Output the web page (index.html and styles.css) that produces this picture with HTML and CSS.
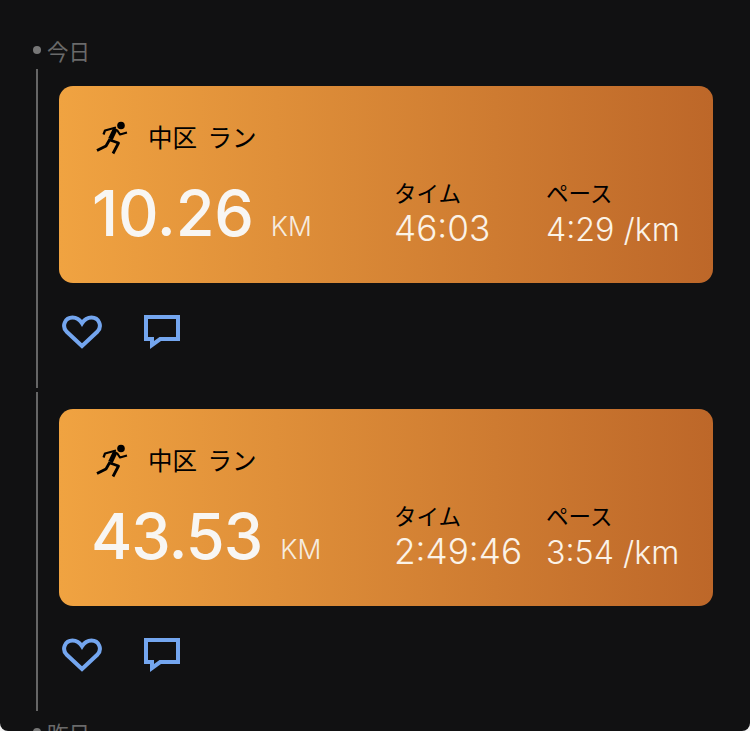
FILE: index.html
```html
<!DOCTYPE html>
<html lang="ja">
<head>
<meta charset="utf-8">
<title>今日</title>
<link rel="stylesheet" href="styles.css">
</head>
<body>
<main class="feed">
  <div class="day"><span class="dot"></span><span>今日</span></div>
  <section class="entry">
    <article class="card">
      <div class="title">
        <svg class="runner" viewBox="0 0 32 36">
          <circle class="runner-head" cx="25" cy="5.500" r="3.800"/>
          <path class="limb-torso" d="M19.500 8.500 L14.500 19"/>
          <path class="limb-thin" d="M7.500 14.500 L9 10.500 L20 7.500"/>
          <path class="limb-thin" d="M21 10 L24 14.500 L31 12.500"/>
          <path class="limb" d="M14 19 L10 26 L1 30.500"/>
          <path class="limb" d="M14 20 L22.500 23 L17 33.500"/>
        </svg>
        <span class="place">中区 ラン</span>
      </div>
      <div class="stats">
        <div class="distance"><span class="big big-a">10.26</span><span class="unit">KM</span></div>
        <div class="metric metric-time"><span class="label">タイム</span><span class="value value-time">46:03</span></div>
        <div class="metric"><span class="label">ペース</span><span class="value value-pace">4:29 /km</span></div>
      </div>
    </article>
    <div class="actions">
      <svg class="heart" viewBox="0 0 40 34"><path d="M20 31 L4.500 16.500 C-0.500 11 3 2.500 10.500 2.500 C14.500 2.500 18 5 20 8.200 C22 5 25.500 2.500 29.500 2.500 C37 2.500 40.500 11 35.500 16.500 Z"/></svg>
      <svg class="bubble" viewBox="0 0 36 34"><path fill-rule="evenodd" d="M0 0 H36 V26 H17 L6 34 V26 H0 Z M4 4 V22 H10 V26 L15.500 22 H32 V4 Z"/></svg>
    </div>
  </section>
  <section class="entry">
    <article class="card">
      <div class="title">
        <svg class="runner" viewBox="0 0 32 36">
          <circle class="runner-head" cx="25" cy="5.500" r="3.800"/>
          <path class="limb-torso" d="M19.500 8.500 L14.500 19"/>
          <path class="limb-thin" d="M7.500 14.500 L9 10.500 L20 7.500"/>
          <path class="limb-thin" d="M21 10 L24 14.500 L31 12.500"/>
          <path class="limb" d="M14 19 L10 26 L1 30.500"/>
          <path class="limb" d="M14 20 L22.500 23 L17 33.500"/>
        </svg>
        <span class="place">中区 ラン</span>
      </div>
      <div class="stats">
        <div class="distance"><span class="big big-b">43.53</span><span class="unit">KM</span></div>
        <div class="metric metric-time"><span class="label">タイム</span><span class="value value-time">2:49:46</span></div>
        <div class="metric"><span class="label">ペース</span><span class="value value-pace">3:54 /km</span></div>
      </div>
    </article>
    <div class="actions">
      <svg class="heart" viewBox="0 0 40 34"><path d="M20 31 L4.500 16.500 C-0.500 11 3 2.500 10.500 2.500 C14.500 2.500 18 5 20 8.200 C22 5 25.500 2.500 29.500 2.500 C37 2.500 40.500 11 35.500 16.500 Z"/></svg>
      <svg class="bubble" viewBox="0 0 36 34"><path fill-rule="evenodd" d="M0 0 H36 V26 H17 L6 34 V26 H0 Z M4 4 V22 H10 V26 L15.500 22 H32 V4 Z"/></svg>
    </div>
  </section>
  <div class="day day-next"><span class="dot"></span><span>昨日</span></div>
</main>
</body>
</html>
```

FILE: styles.css
```css
* { box-sizing: border-box; }
html, body { margin: 0; height: 731px; overflow: hidden; background: #f4f4f4; }
body { font-family: Inter, "Noto Sans CJK JP", sans-serif; }
.feed {
  width: 750px;
  height: 731px;
  overflow: hidden;
  background: #111112;
  border-radius: 0 0 8px 8px;
  padding-top: 36px;
  display: flex;
  flex-direction: column;
}
.day {
  height: 29px;
  padding-left: 33px;
  display: flex;
  align-items: flex-start;
  gap: 6px;
  color: #6a6a6a;
  font-size: 21.500px;
  line-height: 29px;
  font-family: "Noto Sans CJK JP", sans-serif;
  font-weight: 400;
  flex: none;
}
.dot {
  width: 8px;
  height: 8px;
  border-radius: 50%;
  background: #777;
  margin-top: 10px;
}
.day-next { margin-top: 7px; }
.entry {
  flex: none;
  margin: 4px 37px 0 36px;
  width: 677px;
  height: 319px;
  border-left: 2px solid #666;
  padding: 17px 0 0 21px;
}
.card {
  height: 197px;
  border-radius: 14px;
  background: linear-gradient(90deg, #f0a341 0%, #bd6729 100%);
  padding: 32px 33px 0 32px;
}
.title {
  display: flex;
  align-items: flex-start;
  gap: 20px;
  height: 38px;
  color: #000;
  font-family: "Noto Sans CJK JP", sans-serif;
  font-size: 24.500px;
  line-height: 38px;
}
.place { word-spacing: 5px; }
.runner { width: 32px; height: 36px; margin: 2px 0 0 5px; flex: none; }
.runner-head { fill: #000; }
.limb, .limb-thin, .limb-torso { fill: none; stroke: #000; stroke-linejoin: round; }
.limb { stroke-width: 2.800; }
.limb-thin { stroke-width: 2.200; }
.limb-torso { stroke-width: 4.800; }
.stats { display: flex; align-items: flex-start; margin-top: 18px; }
.distance { width: 303px; flex: none; display: flex; align-items: baseline; color: #f8f6f3; }
.big { font-size: 63px; line-height: 78px; font-weight: 450; }
.big-a { margin-right: 17px; letter-spacing: -0.200px; margin-left: 1px; }
.big-b { margin-right: 18px; letter-spacing: -1px; }
.unit { font-size: 26.500px; font-weight: 300; color: #f6ece0; }
.metric { display: flex; flex-direction: column; margin-top: 2px; }
.metric-time { width: 152px; flex: none; }
.label {
  font-family: "Noto Sans CJK JP", sans-serif;
  font-size: 22.500px;
  line-height: 32px;
  color: #000;
}
.value { font-weight: 300; color: #fbf3e8; white-space: nowrap; }
.value-time { font-size: 35.200px; line-height: 41px; }
.value-pace { font-size: 32.200px; line-height: 43px; }
.actions { display: flex; align-items: flex-start; gap: 42px; padding: 32px 0 0 3px; }
.heart { width: 40px; height: 34px; fill: none; stroke: #74a6ef; stroke-width: 4; stroke-linejoin: miter; flex: none; }
.bubble { width: 36px; height: 34px; fill: #74a6ef; flex: none; }
```
